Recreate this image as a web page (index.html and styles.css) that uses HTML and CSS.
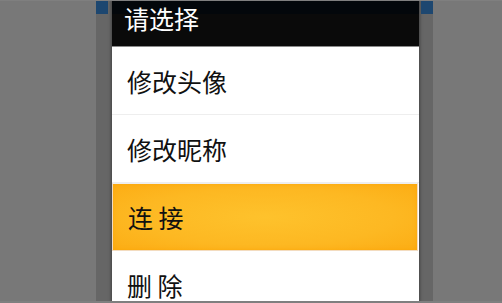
FILE: index.html
```html
<!DOCTYPE html>
<html lang="zh">
<head>
<meta charset="utf-8">
<title>请选择</title>
<link rel="stylesheet" href="styles.css">
</head>
<body>
<div class="frame">
  <div class="screen">
    <div class="side side-left"><div class="status"></div></div>
    <div class="dialog">
      <div class="title"><span class="title-text">请选择</span></div>
      <ul class="menu">
        <li class="item">修改头像</li>
        <li class="item">修改昵称</li>
        <li class="item active">连 接</li>
        <li class="item">删 除</li>
      </ul>
    </div>
    <div class="side side-right"><div class="status"></div></div>
  </div>
</div>
</body>
</html>
```
FILE: styles.css
```css
html, body {
  margin: 0;
  padding: 0;
}
body {
  width: 502px;
  height: 303px;
  overflow: hidden;
  background: #7f7f7f;
  font-family: "Noto Sans CJK SC", "DejaVu Sans", sans-serif;
}
.frame {
  height: 300px;
  margin-top: 1px;
  background: #787878;
  display: flex;
  overflow: hidden;
}
.screen {
  margin-left: 96px;
  width: 337px;
  height: 300px;
  display: flex;
  background: #666666;
}
.side-left {
  width: 16px;
}
.side-right {
  width: 14px;
}
.status {
  height: 13px;
  background: #1d4770;
}
.side-left .status {
  width: 12px;
}
.side-right .status {
  margin-left: 2px;
}
.dialog {
  width: 307px;
  height: 300px;
  background: #ffffff;
  box-shadow: 0 0 3px 1px rgba(0, 0, 0, 0.35);
  display: flex;
  flex-direction: column;
  overflow: hidden;
}
.title {
  flex: none;
  height: 45px;
  background: linear-gradient(#03070b 0, #03070b 13px, #0a0a0a 13px);
  border-bottom: 1px solid #8a8a8a;
  color: #ffffff;
  font-size: 25px;
  padding-left: 12px;
}
.title-text {
  display: block;
  line-height: 34px;
}
.menu {
  flex: none;
  list-style: none;
  margin: 0;
  padding: 0;
}
.item {
  height: 67px;
  display: flex;
  align-items: center;
  padding-left: 15px;
  font-size: 25px;
  color: #111111;
  border-bottom: 1px solid #eeeeee;
}
.item.active {
  height: 66px;
  margin-right: 1px;
  border: 1px solid #f3dcc0;
  border-top-color: #eeeeee;
  padding-left: 15px;
  background: radial-gradient(ellipse at center, #fec22c 0%, #fdb822 60%, #fcad14 100%);
  box-shadow: inset 0 0 4px rgba(250, 160, 0, 0.6);
  color: #111111;
}
```
